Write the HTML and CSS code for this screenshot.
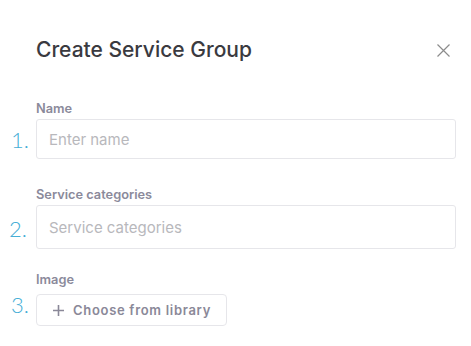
FILE: index.html
```html
<!DOCTYPE html>
<html lang="en">
<head>
    <meta charset="UTF-8">
    <meta name="viewport" content="width=device-width, initial-scale=1.0">
    <title>Create Service Group</title>
    <link rel="stylesheet" href="styles.css">
</head>
<body>
    <div class="modal">
        <div class="modal-header">
            <h1 class="modal-title">Create Service Group</h1>
            <button class="close-btn" aria-label="Close">
                <svg width="13" height="13" viewBox="0 0 13 13">
                    <path d="M0.5 0.5 L12.5 12.5 M12.5 0.5 L0.5 12.5" stroke="#8c8c8c" stroke-width="1.2" fill="none"/>
                </svg>
            </button>
        </div>

        <div class="field field--name">
            <span></span>
            <label class="field-label">Name</label>
            <span class="step">1.</span>
            <input class="field-input" type="text" placeholder="Enter name">
        </div>

        <div class="field field--cats">
            <span></span>
            <label class="field-label">Service categories</label>
            <span class="step">2.</span>
            <input class="field-input field-input--tall" type="text" placeholder="Service categories">
        </div>

        <div class="field field--image">
            <span></span>
            <label class="field-label">Image</label>
            <span class="step">3.</span>
            <div>
                <button class="library-btn">
                    <svg width="11" height="11" viewBox="0 0 11 11">
                        <path d="M5.5 0 V11 M0 5.5 H11" stroke="#8a8898" stroke-width="1.6" fill="none"/>
                    </svg>
                    Choose from library
                </button>
            </div>
        </div>
    </div>
</body>
</html>
```

FILE: styles.css
```css
html, body {
    height: 100%;
}
body {
    margin: 0;
    background: #fff;
    font-family: Inter, 'Open Sans', Arial, sans-serif;
    color: #3b3b40;
}
.modal {
    padding: 37px 15px 0 0;
}
.modal-header {
    display: flex;
    align-items: center;
    justify-content: space-between;
    padding-left: 36px;
    margin-bottom: 38px;
}
.modal-title {
    margin: 0;
    font-size: 21px;
    font-weight: 500;
    color: #3a3a3f;
    line-height: 26px;
}
.close-btn {
    border: 0;
    background: none;
    padding: 0;
    margin-right: 6px;
    display: flex;
    cursor: pointer;
}
.field {
    display: grid;
    grid-template-columns: 36px 1fr;
    align-items: end;
}
.field--name {
    margin-bottom: 28px;
}
.field--cats {
    margin-bottom: 23px;
}
.field-label {
    font-size: 12.8px;
    font-weight: 600;
    color: #8b8a9b;
    margin-bottom: 3px;
    line-height: 15px;
}
.field--image .field-label {
    margin-bottom: 7px;
}
.step {
    font-family: Lato, sans-serif;
    font-weight: 300;
    font-size: 22px;
    color: #46aed6;
    line-height: 1;
    padding-left: 11px;
    margin-bottom: 9px;
}
.field--name .step {
    margin-bottom: 8px;
}
.field--cats .step {
    padding-left: 9px;
}
.field--image .step {
    margin-bottom: 10px;
}
.field-input {
    box-sizing: border-box;
    width: 100%;
    height: 40px;
    border: 1px solid #e6e6ea;
    border-radius: 3px;
    padding: 0 12px;
    font-family: inherit;
    font-size: 15px;
    color: #3b3b40;
    outline: none;
}
.field-input--tall {
    height: 44px;
}
.field-input::placeholder {
    color: #b8b8bc;
}
.library-btn {
    display: inline-flex;
    align-items: center;
    gap: 9px;
    height: 32px;
    padding: 0 15px 0 16px;
    border: 1px solid #e6e6ea;
    border-radius: 4px;
    background: #fff;
    font-family: inherit;
    font-size: 13px;
    font-weight: 600;
    letter-spacing: 0.7px;
    color: #8a8898;
    cursor: pointer;
}
```
